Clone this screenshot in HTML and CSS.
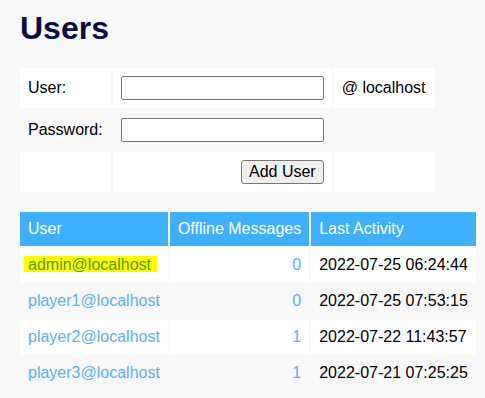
FILE: index.html
```html
<!DOCTYPE html>
<html>
<head>
<meta charset="utf-8">
<link rel="stylesheet" href="styles.css">
</head>
<body>
<h1 class="title">Users</h1>
<table class="form-table">
  <tr>
    <td>User:</td>
    <td><input class="field" type="text"></td>
    <td>@ localhost</td>
  </tr>
  <tr>
    <td>Password:</td>
    <td><input class="field" type="password"></td>
  </tr>
  <tr>
    <td></td>
    <td class="right"><button class="btn">Add User</button></td>
    <td></td>
  </tr>
</table>
<table class="users">
  <tr>
    <th>User</th>
    <th>Offline Messages</th>
    <th>Last Activity</th>
  </tr>
  <tr>
    <td><a class="link current" href="#">admin@localhost</a></td>
    <td class="num"><a class="link" href="#">0</a></td>
    <td>2022-07-25 06:24:44</td>
  </tr>
  <tr>
    <td><a class="link" href="#">player1@localhost</a></td>
    <td class="num"><a class="link" href="#">0</a></td>
    <td>2022-07-25 07:53:15</td>
  </tr>
  <tr>
    <td><a class="link" href="#">player2@localhost</a></td>
    <td class="num"><a class="link" href="#">1</a></td>
    <td>2022-07-22 11:43:57</td>
  </tr>
  <tr>
    <td><a class="link" href="#">player3@localhost</a></td>
    <td class="num"><a class="link" href="#">1</a></td>
    <td>2022-07-21 07:25:25</td>
  </tr>
</table>
</body>
</html>
```
FILE: styles.css
```css
html, body {
  margin: 0;
  padding: 0;
  background: #f8f8f8;
}
body {
  padding-left: 18px;
  font-family: "Liberation Sans", Arial, sans-serif;
  font-size: 16px;
  color: #000;
}
.title {
  margin: 10px 0 19px 2px;
  font-size: 32px;
  line-height: 37px;
  font-weight: bold;
  color: #0b0b45;
}
.form-table {
  border-spacing: 2px;
  border-collapse: separate;
}
.form-table td {
  padding: 8px;
  line-height: 24px;
  vertical-align: middle;
}
.form-table tr:nth-child(odd) td {
  background: #fff;
}
.right {
  text-align: right;
}
.field {
  display: block;
  box-sizing: border-box;
  width: 203px;
  height: 24px;
  margin: 0;
  border: 1px solid #767676;
  border-radius: 2px;
  background: #fff;
  font: 13px "Liberation Sans", Arial, sans-serif;
}
.btn {
  box-sizing: border-box;
  height: 24px;
  margin: 0;
  padding: 0 7px;
  border: 1px solid #767676;
  border-radius: 3px;
  background: #efefef;
  font: 16px/20px "Liberation Sans", Arial, sans-serif;
  color: #000;
  vertical-align: top;
}
.users {
  margin-top: 16px;
  border-spacing: 2px;
  border-collapse: separate;
}
.users th {
  padding: 8px;
  line-height: 18px;
  text-align: left;
  font-weight: normal;
  color: #fff;
  background: #3fb0fd;
}
.users td {
  padding: 8px;
  line-height: 18px;
}
.users tr:nth-child(even) td {
  background: #fff;
}
.num {
  text-align: right;
}
.link {
  color: #5aaefa;
  text-decoration: none;
}
.current {
  display: inline-block;
  height: 16px;
  margin-left: -4px;
  padding: 0 6px 0 4px;
  line-height: normal;
  background: #ffff00;
  color: #4f9a00;
  vertical-align: baseline;
}
```
